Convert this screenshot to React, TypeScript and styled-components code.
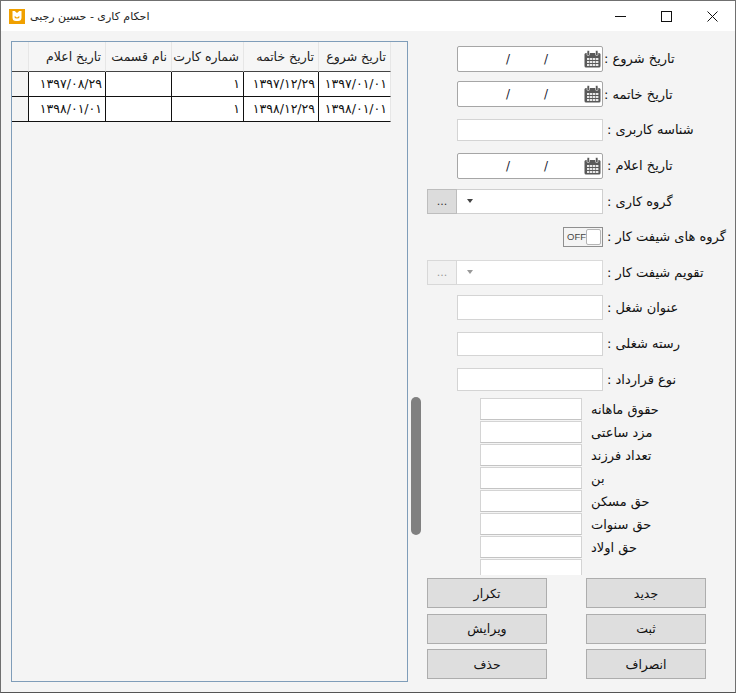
import styled, { createGlobalStyle } from "styled-components";

const columns = [
  { title: "تاریخ شروع", width: 72 },
  { title: "تاریخ خاتمه", width: 75 },
  { title: "شماره کارت", width: 72 },
  { title: "نام قسمت", width: 66 },
  { title: "تاریخ اعلام", width: 77 },
];

const rows = [
  ["۱۳۹۷/۰۱/۰۱", "۱۳۹۷/۱۲/۲۹", "۱", "", "۱۳۹۷/۰۸/۲۹"],
  ["۱۳۹۸/۰۱/۰۱", "۱۳۹۸/۱۲/۲۹", "۱", "", "۱۳۹۸/۰۱/۰۱"],
];

const money = [
  "حقوق ماهانه",
  "مزد ساعتی",
  "تعداد فرزند",
  "بن",
  "حق مسکن",
  "حق سنوات",
  "حق اولاد",
  "",
];

const buttons = ["تکرار", "جدید", "ویرایش", "ثبت", "حذف", "انصراف"];

function CalendarIcon() {
  return (
    <svg width="17" height="18" viewBox="0 0 17 18">
      <rect x="0.5" y="3" width="16" height="14.5" rx="1.5" fill="#595959" />
      <rect x="3" y="0.5" width="2.5" height="5" rx="1" fill="#595959" stroke="#fff" strokeWidth="0.6" />
      <rect x="11.5" y="0.5" width="2.5" height="5" rx="1" fill="#595959" stroke="#fff" strokeWidth="0.6" />
      <path
        d="M3 8h2.4v2H3zM6 8h2.4v2H6zM9 8h2.4v2H9zM12 8h2.4v2H12zM3 11h2.4v2H3zM6 11h2.4v2H6zM9 11h2.4v2H9zM12 11h2.4v2H12zM3 14h2.4v2H3zM6 14h2.4v2H6zM9 14h2.4v2H9zM12 14h2.4v2H12z"
        fill="#e8e8e8"
      />
    </svg>
  );
}

function DateField() {
  return (
    <DateBox>
      <CalendarSlot>
        <CalendarIcon />
      </CalendarSlot>
      <Slash>/</Slash>
      <Slash>/</Slash>
    </DateBox>
  );
}

function Combo({ disabled }: { disabled?: boolean }) {
  return (
    <ComboWrap>
      <DotsButton $disabled={disabled}>...</DotsButton>
      <ComboBox $disabled={disabled}>
        <Caret $disabled={disabled} />
      </ComboBox>
    </ComboWrap>
  );
}

export default function App() {
  return (
    <>
      <GlobalStyle />
      <Window>
        <TitleBar>
          <AppIcon>
            <svg width="12" height="12" viewBox="0 0 12 12">
              <path
                d="M1.5 1h2.2L6 3l2.3-2h2.2v6.5A3.5 3.5 0 0 1 7 11H5a3.5 3.5 0 0 1-3.5-3.5z"
                fill="#fff"
              />
              <path d="M3.8 6.5c.6 2 3.8 2 4.4 0" fill="none" stroke="#f0a000" strokeWidth="1.2" />
            </svg>
          </AppIcon>
          <Title dir="rtl">احکام کاری - حسین رجبی</Title>
          <WindowControls>
            <ControlButton>
              <svg width="11" height="11" viewBox="0 0 11 11">
                <path d="M0 5.5h11" stroke="#111" />
              </svg>
            </ControlButton>
            <ControlButton>
              <svg width="11" height="11" viewBox="0 0 11 11">
                <rect x="0.5" y="0.5" width="10" height="10" fill="none" stroke="#111" />
              </svg>
            </ControlButton>
            <ControlButton>
              <svg width="11" height="11" viewBox="0 0 11 11">
                <path d="M0.5 0.5l10 10M10.5 0.5l-10 10" stroke="#111" />
              </svg>
            </ControlButton>
          </WindowControls>
        </TitleBar>
        <Body>
          <GridPanel>
            <GridRow>
              <RowHeader $head />
              {[...columns].reverse().map((c) => (
                <HeadCell key={c.title} $w={c.width} dir="rtl">
                  {c.title}
                </HeadCell>
              ))}
            </GridRow>
            {rows.map((r) => (
              <GridRow key={r[0]}>
                <RowHeader />
                {[...r].reverse().map((v, i) => (
                  <Cell key={i} $w={columns[4 - i].width} $last={i === 4} dir="ltr">
                    {v}
                  </Cell>
                ))}
              </GridRow>
            ))}
          </GridPanel>
          <SidePane>
            <Thumb />
            <FormScroll>
              <MainForm>
                <FormRow>
                  <DateField />
                  <Label dir="rtl">تاریخ شروع :</Label>
                </FormRow>
                <FormRow>
                  <DateField />
                  <Label dir="rtl">تاریخ خاتمه :</Label>
                </FormRow>
                <FormRow>
                  <TextBox $h={22} />
                  <Label dir="rtl" $offset={4}>شناسه کاربری :</Label>
                </FormRow>
                <FormRow>
                  <DateField />
                  <Label dir="rtl" $offset={4}>تاریخ اعلام :</Label>
                </FormRow>
                <FormRow>
                  <Combo />
                  <Label dir="rtl" $offset={4}>گروه کاری :</Label>
                </FormRow>
                <FormRow>
                  <ToggleWrap>
                    <Toggle>
                      <ToggleText>OFF</ToggleText>
                      <ToggleKnob />
                    </Toggle>
                  </ToggleWrap>
                  <Label dir="rtl" $offset={4}>گروه های شیفت کار :</Label>
                </FormRow>
                <FormRow>
                  <Combo disabled />
                  <Label dir="rtl" $offset={4}>تقویم شیفت کار :</Label>
                </FormRow>
                <FormRow>
                  <TextBox $h={25} />
                  <Label dir="rtl" $offset={4}>عنوان شغل :</Label>
                </FormRow>
                <FormRow>
                  <TextBox $h={24} />
                  <Label dir="rtl" $offset={4}>رسته شغلی :</Label>
                </FormRow>
                <FormRow>
                  <TextBox $h={23} />
                  <Label dir="rtl" $offset={4}>نوع قرارداد :</Label>
                </FormRow>
              </MainForm>
              <MoneyList>
                {money.map((m, i) => (
                  <MoneyRow key={i}>
                    <MoneyBox />
                    <MoneyLabel dir="rtl">{m}</MoneyLabel>
                  </MoneyRow>
                ))}
              </MoneyList>
            </FormScroll>
            <ButtonGrid>
              {buttons.map((b) => (
                <ActionButton key={b} dir="rtl">
                  {b}
                </ActionButton>
              ))}
            </ButtonGrid>
          </SidePane>
        </Body>
      </Window>
    </>
  );
}

const GlobalStyle = createGlobalStyle`
  html, body {
    margin: 0;
    padding: 0;
    background: #f3f3f3;
  }
  * {
    box-sizing: border-box;
  }
`;

const Window = styled.div`
  width: 736px;
  height: 693px;
  display: flex;
  flex-direction: column;
  background: #f4f4f4;
  border: 1px solid #707070;
  border-bottom-color: #555;
  font-family: "DejaVu Sans", "Noto Sans", sans-serif;
  font-size: 13px;
  color: #111;
  overflow: hidden;
`;

const TitleBar = styled.div`
  height: 30px;
  flex: none;
  background: #fff;
  display: flex;
  align-items: center;
  padding-left: 8px;
`;

const AppIcon = styled.div`
  width: 16px;
  height: 15px;
  background: #f0a000;
  display: flex;
  align-items: center;
  justify-content: center;
`;

const Title = styled.div`
  margin-left: 5px;
  font-size: 11px;
  color: #222;
`;

const WindowControls = styled.div`
  margin-left: auto;
  display: flex;
`;

const ControlButton = styled.div`
  width: 46px;
  height: 30px;
  display: flex;
  align-items: center;
  justify-content: center;
`;

const Body = styled.div`
  flex: 1;
  display: flex;
  min-height: 0;
`;

const GridPanel = styled.div`
  width: 397px;
  height: 641px;
  margin: 10px 0 0 10px;
  border: 1px solid #7f9db9;
  flex: none;
`;

const GridRow = styled.div`
  display: flex;
`;

const RowHeader = styled.div<{ $head?: boolean }>`
  width: 17px;
  height: ${(p) => (p.$head ? "30px" : "25px")};
  background: #f4f4f4;
  border-right: 1px solid ${(p) => (p.$head ? "#e6e6e6" : "#111")};
  border-bottom: 1px solid ${(p) => (p.$head ? "#444" : "#111")};
`;

const HeadCell = styled.div<{ $w: number }>`
  width: ${(p) => p.$w}px;
  height: 30px;
  padding: 7px 4px 0 0;
  text-align: right;
  white-space: nowrap;
  overflow: hidden;
  font-size: 12.5px;
  color: #222;
  background: #f6f6f6;
  border-right: 1px solid #e6e6e6;
  border-bottom: 1px solid #444;
`;

const Cell = styled.div<{ $w: number; $last?: boolean }>`
  width: ${(p) => p.$w}px;
  height: 25px;
  padding: 4px 3px 0 0;
  text-align: right;
  white-space: nowrap;
  font-size: 12.5px;
  background: #fff;
  border-right: 1px solid ${(p) => (p.$last ? "#e6e6e6" : "#111")};
  border-bottom: 1px solid #111;
`;

const SidePane = styled.div`
  position: relative;
  flex: 1;
  min-width: 0;
  display: flex;
  flex-direction: column;
`;

const Thumb = styled.div`
  position: absolute;
  left: 3px;
  top: 366px;
  width: 10px;
  height: 138px;
  border-radius: 5px;
  background: #808080;
`;

const FormScroll = styled.div`
  height: 544px;
  padding-top: 10px;
  overflow: hidden;
  flex: none;
`;

const MainForm = styled.div`
  display: grid;
  grid-auto-rows: 35.6px;
  padding-left: 19px;
`;

const FormRow = styled.div`
  display: grid;
  grid-template-columns: 176px 1fr;
  align-items: center;
`;

const Label = styled.div<{ $offset?: number }>`
  text-align: left;
  padding-left: ${(p) => p.$offset ?? 1}px;
  font-size: 13px;
  white-space: nowrap;
`;

const DateBox = styled.div`
  margin-left: 30px;
  height: 26px;
  display: flex;
  align-items: center;
  background: #fff;
  border: 1px solid #a6a6a6;
  border-radius: 2px;
  direction: rtl;
`;

const CalendarSlot = styled.div`
  width: 20px;
  margin-left: 17px;
  display: flex;
  align-items: center;
  justify-content: center;
  flex: none;
`;

const Slash = styled.span`
  width: 38px;
  flex: none;
  color: #223;
  text-align: center;
  font-size: 12px;
`;

const TextBox = styled.div<{ $h: number }>`
  margin-left: 30px;
  height: ${(p) => p.$h}px;
  background: #fff;
  border: 1px solid #d4d4d4;
`;

const ComboWrap = styled.div`
  height: 25px;
  display: flex;
`;

const DotsButton = styled.div<{ $disabled?: boolean }>`
  width: 30px;
  flex: none;
  background: ${(p) => (p.$disabled ? "#f1f1f1" : "#dcdcdc")};
  color: ${(p) => (p.$disabled ? "#999" : "#333")};
  border: 1px solid ${(p) => (p.$disabled ? "#d8d8d8" : "#bdbdbd")};
  text-align: center;
  line-height: 24px;
  font-size: 11px;
`;

const ComboBox = styled.div<{ $disabled?: boolean }>`
  flex: 1;
  background: #fff;
  border: 1px solid ${(p) => (p.$disabled ? "#dadada" : "#cfcfcf")};
  border-left: none;
  display: flex;
  align-items: center;
  padding-left: 10px;
`;

const Caret = styled.div<{ $disabled?: boolean }>`
  width: 0;
  height: 0;
  border-left: 3.5px solid transparent;
  border-right: 3.5px solid transparent;
  border-top: 4px solid ${(p) => (p.$disabled ? "#999" : "#444")};
`;

const ToggleWrap = styled.div`
  display: flex;
  justify-content: flex-end;
`;

const Toggle = styled.div`
  width: 40px;
  height: 20px;
  display: flex;
  align-items: center;
  justify-content: space-between;
  padding: 1px;
  background: #f4f4f4;
  border: 1px solid #8f8f8f;
`;

const ToggleText = styled.span`
  font-family: "Liberation Sans", sans-serif;
  font-size: 9.5px;
  color: #444;
  padding-left: 2px;
`;

const ToggleKnob = styled.div`
  width: 16px;
  height: 16px;
  background: #fff;
  border: 1px solid #b5b5b5;
  border-radius: 2px;
`;

const MoneyList = styled.div`
  margin-top: 1px;
`;

const MoneyRow = styled.div`
  height: 23px;
  display: grid;
  grid-template-columns: 102px 1fr;
  column-gap: 9px;
  padding-left: 72px;
  align-items: center;
`;

const MoneyBox = styled.div`
  height: 22px;
  background: #fff;
  border: 1px solid #d4d4d4;
  border-bottom-color: #c4c4c4;
`;

const MoneyLabel = styled.div`
  text-align: left;
  font-size: 13px;
  white-space: nowrap;
`;

const ButtonGrid = styled.div`
  display: grid;
  grid-template-columns: 120px 120px;
  grid-template-rows: 30px 30px 30px;
  column-gap: 39px;
  row-gap: 5.5px;
  padding: 3px 0 0 19px;
`;

const ActionButton = styled.div`
  background: #dedede;
  border: 1px solid #adadad;
  display: flex;
  align-items: center;
  justify-content: center;
  font-size: 12.5px;
`;
